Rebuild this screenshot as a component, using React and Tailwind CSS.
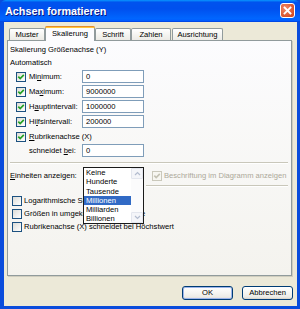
import React from "react";

function Check({ checked = true, disabled = false }) {
  return (
    <span
      className={`w-[10px] h-[10px] shrink-0 border flex items-center justify-center ${
        disabled
          ? "border-[#CAC8BB] bg-[#F7F6F1]"
          : "border-[#1C5180] bg-[linear-gradient(135deg,#DCDCD7,#FFFFFF)]"
      }`}
    >
      {checked && (
        <svg width="8" height="8" viewBox="0 0 8 8">
          <path
            d="M1.3 3.6 L3.2 5.6 L6.8 1.9"
            fill="none"
            stroke={disabled ? "#C4C2B4" : "#21A121"}
            strokeWidth="1.6"
          />
        </svg>
      )}
    </span>
  );
}

function Input({ value }) {
  return (
    <div className="h-[13px] w-[62px] border border-[#7F9DB9] bg-white pl-[3px] flex items-center">
      {value}
    </div>
  );
}

function Row({ children, value }) {
  return (
    <div className="h-[15px] flex items-center">
      <span className="ml-[6px] mr-[3px]">
        <Check />
      </span>
      <span className="w-[53px] whitespace-nowrap">{children}</span>
      {value !== undefined && <Input value={value} />}
    </div>
  );
}

function Tab({ children, w, selected }) {
  if (selected) {
    return (
      <div
        className={`${w} h-[15px] -mb-[1px] relative z-10 border-x border-[#919B9C] rounded-t-[3px] bg-[#FCFCFE] flex flex-col`}
      >
        <div className="h-[2px] bg-[#FFC83C] rounded-t-[2px] border-t border-[#E68B2C] -mx-[1px]" />
        <div className="flex-1 flex items-center justify-center pb-[1px]">{children}</div>
      </div>
    );
  }
  return (
    <div
      className={`${w} h-[12px] border-x border-t border-[#919B9C] rounded-t-[2px] bg-[linear-gradient(to_bottom,#FFFFFF,#F3F3EF_60%,#ECEBE6)] flex items-center justify-center`}
    >
      {children}
    </div>
  );
}

function ListItem({ children, sel }) {
  return (
    <div
      className={`h-[9.3px] leading-[9.3px] pl-[2px] whitespace-nowrap ${
        sel ? "bg-[#316AC5] text-white" : ""
      }`}
    >
      {children}
    </div>
  );
}

function ScrollBtn({ up }) {
  return (
    <div className="h-[11px] w-full border border-[#E3E6EE] bg-[#F4F5F9] rounded-[1px] flex items-center justify-center">
      <svg width="7" height="5" viewBox="0 0 7 5">
        <path
          d={up ? "M1 4 L3.5 1.5 L6 4" : "M1 1 L3.5 3.5 L6 1"}
          fill="none"
          stroke="#B3BCCF"
          strokeWidth="1.2"
        />
      </svg>
    </div>
  );
}

function Btn({ children, def }) {
  return (
    <div
      className={`w-[51px] h-[14px] rounded-[3px] border border-[#003C74] bg-[linear-gradient(to_bottom,#FFFFFF,#F5F5F1_50%,#ECEBE6_85%,#D6D0C5)] flex items-center justify-center ${
        def ? "shadow-[inset_0_0_0_1px_#9DB5EA]" : ""
      }`}
    >
      {children}
    </div>
  );
}

export default function App() {
  return (
    <div className="w-[300px] h-[309px] flex flex-col bg-[#0A4CDC] font-['Liberation_Sans',Arial,sans-serif] text-[7.6px] text-black overflow-hidden">
      {/* Title bar */}
      <div className="h-[22px] shrink-0 flex items-center bg-[linear-gradient(to_bottom,#0997FF,#0053EE_10%,#0050EE_40%,#0066FF_85%,#005BFF_94%,#003DD7)] rounded-t-[6px]">
        <span className="pl-[5px] text-white font-bold text-[10.8px] [text-shadow:1px_1px_0_#0A1883]">
          Achsen formatieren
        </span>
        <div className="ml-auto mr-[5px] mt-[-1px] w-[15px] h-[15px] rounded-[3px] border border-white bg-[radial-gradient(circle_at_35%_35%,#F08A68,#D8532C_70%,#C2411F)] flex items-center justify-center">
          <svg width="9" height="9" viewBox="0 0 9 9">
            <path d="M1.5 1.5 L7.5 7.5 M7.5 1.5 L1.5 7.5" stroke="white" strokeWidth="1.8" strokeLinecap="square" />
          </svg>
        </div>
      </div>

      {/* Body */}
      <div className="flex-1 ml-[4px] mr-[3px] mb-[3px] bg-[#ECE9D8] flex flex-col pt-[4px]">
        {/* Tabs */}
        <div className="h-[14px] flex items-end pl-[5px]">
          <Tab w="w-[36px]">Muster</Tab>
          <Tab w="w-[50px]" selected>
            Skalierung
          </Tab>
          <Tab w="w-[36px]">Schrift</Tab>
          <Tab w="w-[40px]">Zahlen</Tab>
          <div className="w-[1px]" />
          <Tab w="w-[51px]">Ausrichtung</Tab>
        </div>

        {/* Panel */}
        <div className="ml-[3px] mr-[5px] h-[236px] border border-[#919B9C] bg-[linear-gradient(to_bottom,#FCFCFE,#F4F3EE)] pl-[2px] pt-[2px] flex flex-col shadow-[1px_1px_0_#D0CEBF]">
          <div className="h-[13px] flex items-center">Skalierung Größenachse (Y)</div>
          <div className="h-[13px] flex items-center">Automatisch</div>
          <Row value="0">
            Mi<u>n</u>imum:
          </Row>
          <Row value="9000000">
            Ma<u>x</u>imum:
          </Row>
          <Row value="1000000">
            H<u>a</u>uptintervall:
          </Row>
          <Row value="200000">
            Hi<u>l</u>fsintervall:
          </Row>
          <Row>
            <u>R</u>ubrikenachse (X)
          </Row>
          <div className="h-[13px] flex items-center">
            <span className="ml-[19px] w-[53px]">
              schneidet <u>b</u>ei:
            </span>
            <Input value="0" />
          </div>

          <div className="mt-[5px] mr-[3px] h-[1px] bg-[#C9C7BA]" />
          <div className="mr-[3px] h-[1px] bg-white" />

          {/* Einheiten row */}
          <div className="mt-[5px] h-[14px] flex items-center">
            <span className="w-[73px] whitespace-nowrap">
              <u>E</u>inheiten anzeigen:
            </span>
            <div className="relative w-[61px] h-full">
              <div className="absolute left-0 top-[-2px] w-[61px] h-[57px] z-20 border border-[#1A1A1A] bg-white flex">
                <div className="flex-1">
                  <ListItem>Keine</ListItem>
                  <ListItem>Hunderte</ListItem>
                  <ListItem>Tausende</ListItem>
                  <ListItem sel>Millionen</ListItem>
                  <ListItem>Milliarden</ListItem>
                  <ListItem>Billionen</ListItem>
                </div>
                <div className="w-[12px] flex flex-col justify-between bg-[#FBFBFC]">
                  <ScrollBtn up />
                  <ScrollBtn />
                </div>
              </div>
            </div>
            <span className="ml-[8px]">
              <Check disabled />
            </span>
            <span className="ml-[2px] text-[#ACA899] whitespace-nowrap">Beschriftung im Diagramm anzeigen</span>
          </div>

          <div className="mt-[2px] ml-[136px] mr-[3px] h-[1px] bg-[#C9C7BA]" />
          <div className="ml-[136px] mr-[3px] h-[1px] bg-white" />

          <div className="mt-[7px] flex flex-col">
            {["Logarithmische Skalierung", "Größen in umgekehrter Reihenfolge", "Rubrikenachse (X) schneidet bei Höchstwert"].map(
              (t) => (
                <div key={t} className="h-[13px] flex items-center">
                  <span className="ml-[2px] mr-[2px]">
                    <Check checked={false} />
                  </span>
                  <span className="whitespace-nowrap">{t}</span>
                </div>
              )
            )}
          </div>
        </div>

        {/* Buttons */}
        <div className="flex justify-end gap-[9px] pr-[4px] pt-[10px]">
          <Btn def>OK</Btn>
          <Btn>Abbrechen</Btn>
        </div>
      </div>
    </div>
  );
}
